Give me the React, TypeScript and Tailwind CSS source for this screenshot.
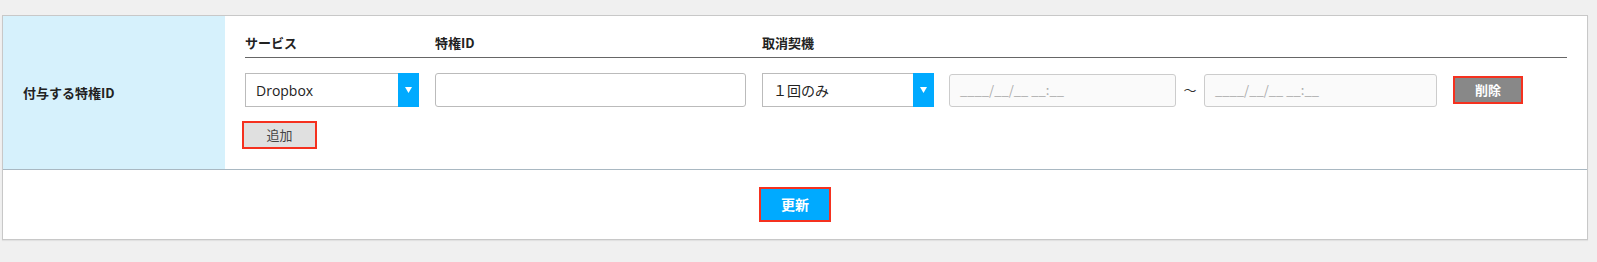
import React from "react";

const jp = "font-['Noto_Sans_CJK_JP','Noto_Sans',sans-serif]";

function Select({ value, width }: { value: string; width: string }) {
  return (
    <div className={`flex h-[34px] items-center border border-[#bbbbbb] bg-white ${width}`}>
      <span className="flex-1 pl-[10px] font-['Open_Sans','Noto_Sans_CJK_JP',sans-serif] text-[14px] text-[#222]">{value}</span>
      <div className="-my-px -mr-px flex w-[21px] self-stretch items-center justify-center bg-[#00aaff]">
        <svg width="7" height="6" viewBox="0 0 7 6">
          <path d="M0 0 L7 0 L3.5 6 Z" fill="#fff" />
        </svg>
      </div>
    </div>
  );
}

function DateInput({ width }: { width: string }) {
  return (
    <div className={`flex h-[33px] items-center rounded-[3px] border border-[#cccccc] bg-[#fafafa] pl-[10px] text-[13px] text-[#aaaaaa] ${width}`}>
      ____/__/__ __:__
    </div>
  );
}

export default function App() {
  return (
    <div className={`min-h-[262px] w-full bg-[#f0f0f0] pt-[15px] ${jp}`}>
      <div className="ml-[2px] w-[1586px] border border-[#c8c8c8] bg-white shadow-[0_1px_1px_rgba(0,0,0,0.06)]">
        {/* 付与する特権ID */}
        <div className="flex border-b border-[#a9b8c2]">
          <div className="flex w-[222px] items-center bg-[#d6f1fc] pl-[20px] text-[13px] font-bold text-[#222]">
            付与する特権ID
          </div>
          <div className="flex-1 px-[20px] pt-[17px] pb-[20px]">
            <div className="flex border-b border-[#666] pb-[4px] text-[13px] font-bold leading-[20px] text-[#222]">
              <div className="w-[190px]">サービス</div>
              <div className="w-[327px]">特権ID</div>
              <div>取消契機</div>
            </div>

            <div className="mt-[15px] flex items-center">
              <Select value="Dropbox" width="w-[174px]" />
              <div className="ml-[16px] h-[34px] w-[311px] rounded-[3px] border border-[#bbbbbb] bg-white" />
              <div className="ml-[16px]">
                <Select value="１回のみ" width="w-[172px]" />
              </div>
              <div className="ml-[15px]">
                <DateInput width="w-[227px]" />
              </div>
              <div className="w-[28px] text-center text-[13px] text-[#333]">〜</div>
              <DateInput width="w-[233px]" />
              <button className="ml-[16px] h-[28px] w-[70px] border-2 border-[#f5311f] bg-[#888888] text-[13px] font-bold text-white">
                削除
              </button>
            </div>

            <button className="-ml-[3px] mt-[14px] h-[28px] w-[75px] border-2 border-[#f5311f] bg-[#e0e0e0] text-[13px] text-[#444]">
              追加
            </button>
          </div>
        </div>

        {/* 更新 */}
        <div className="flex h-[69px] items-center justify-center">
          <button className="h-[35px] w-[72px] border-2 border-[#f5311f] bg-[#00aaff] text-[14px] font-bold text-white">
            更新
          </button>
        </div>
      </div>
    </div>
  );
}
